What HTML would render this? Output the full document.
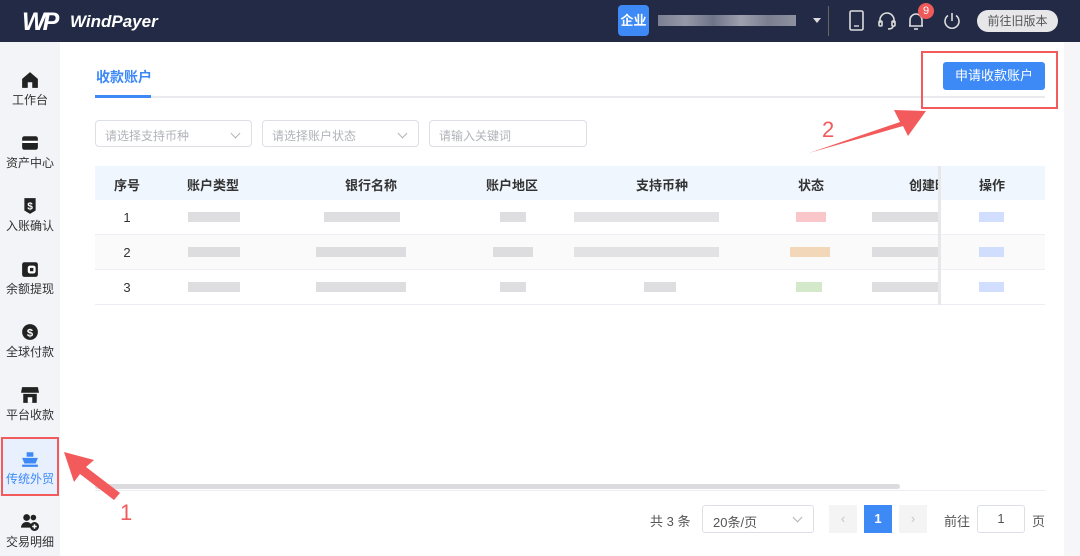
<!DOCTYPE html>
<html><head><meta charset="utf-8"><style>
*{margin:0;padding:0;box-sizing:border-box}
body{width:1080px;height:556px;overflow:hidden;background:#fff;font-family:"Liberation Sans","Noto Sans CJK SC",sans-serif;position:relative;color:#333}
.a{position:absolute}
.hdr{left:0;top:0;width:1080px;height:42px;background:#222a45}
.side{left:0;top:42px;width:60px;height:514px;background:#f3f4f8}
.si{position:absolute;left:0;width:60px;text-align:center;font-size:12px;color:#333}
.si .ic{display:block;margin:0 auto 2px;width:18px;height:18px}
.th{top:166px;height:34px;background:#eff6fd;left:95px;width:950px}
.thc{top:175px;font-size:13px;font-weight:bold;color:#333;transform:translateX(-50%)}
.row{left:95px;width:950px;height:35px;border-bottom:1px solid #ebeef5}
.b{position:absolute;height:10px;background:#d6d6da;opacity:.8}
.sel{border:1px solid #dcdfe6;border-radius:4px;height:27px;top:120px;font-size:12px;color:#b0b3b8;padding:6px 9px}
.chev{position:absolute;right:12px;top:9px;width:7px;height:7px;border-right:1px solid #b0b3b8;border-bottom:1px solid #b0b3b8;transform:rotate(45deg)}
.num{font-size:13px;color:#333;transform:translateX(-50%)}
</style></head><body>
<div class="a hdr"></div>
<div class="a" style="left:22px;top:8px;color:#fff;font-weight:900;font-size:25px;font-style:italic;letter-spacing:-3px">WP</div>
<div class="a" style="left:70px;top:12px;color:#fff;font-weight:bold;font-style:italic;font-size:17px">WindPayer</div>
<div class="a" style="left:618px;top:5px;width:31px;height:31px;background:#3d8af7;border-radius:4px;color:#fff;font-size:13px;font-weight:bold;text-align:center;line-height:31px">企业</div>
<div class="a" style="left:658px;top:15px;width:138px;height:11px;background:linear-gradient(90deg,#8b8fa0,#a8abb8,#7d8194,#b3b5c2,#8a8d9c,#a0a3b0);opacity:.85"></div>
<div class="a" style="left:813px;top:18px;width:0;height:0;border-left:4px solid transparent;border-right:4px solid transparent;border-top:5px solid #ddd"></div>
<div class="a" style="left:828px;top:6px;width:1px;height:30px;background:#666"></div>
<svg class="a" style="left:848px;top:10px" width="18" height="22" viewBox="0 0 18 22"><rect x="2" y="1" width="13" height="19" rx="1.5" fill="none" stroke="#ddd" stroke-width="1.6"/><line x1="6" y1="16" x2="11" y2="16" stroke="#ddd" stroke-width="1.4"/></svg>
<svg class="a" style="left:877px;top:11px" width="20" height="20" viewBox="0 0 20 20" fill="none" stroke="#ddd" stroke-width="1.6"><path d="M3 12V9a7 7 0 0 1 14 0v3"/><rect x="2" y="10" width="3" height="5" rx="1"/><rect x="15" y="10" width="3" height="5" rx="1"/><path d="M16 15c0 2-2 3-5 3"/></svg>
<svg class="a" style="left:906px;top:10px" width="20" height="22" viewBox="0 0 20 22" fill="none" stroke="#ddd" stroke-width="1.6"><path d="M4 16V10a6 6 0 0 1 12 0v6H3h14"/><path d="M8 19h4"/></svg>
<div class="a" style="left:918px;top:3px;width:16px;height:16px;border-radius:50%;background:#f0595a;color:#fff;font-size:11px;text-align:center;line-height:16px">9</div>
<svg class="a" style="left:942px;top:11px" width="20" height="20" viewBox="0 0 20 20" fill="none" stroke="#ddd" stroke-width="1.6"><path d="M10 2v8"/><path d="M6 4.5a7 7 0 1 0 8 0"/></svg>
<div class="a" style="left:977px;top:10px;width:81px;height:22px;border-radius:11px;background:#e7e7ea;color:#555;font-size:12px;text-align:center;line-height:22px">前往旧版本</div>

<div class="a side"></div>
<div class="si" style="top:71px"><svg class="ic" viewBox="0 0 16 16"><path d="M8 1L1 7v8h5v-5h4v5h5V7z" fill="#222"/></svg>工作台</div>
<div class="si" style="top:134px"><svg class="ic" viewBox="0 0 16 16"><rect x="1" y="2" width="14" height="12" rx="2" fill="#222"/><rect x="1" y="6" width="14" height="2" fill="#fff"/></svg>资产中心</div>
<div class="si" style="top:197px"><svg class="ic" viewBox="0 0 16 16"><path d="M3 1h10v11l-5 3-5-3z" fill="#222"/><text x="8" y="11" font-size="9" fill="#fff" text-anchor="middle" font-weight="bold">$</text></svg>入账确认</div>
<div class="si" style="top:260px"><svg class="ic" viewBox="0 0 16 16"><rect x="1" y="2" width="14" height="13" rx="2" fill="#222"/><rect x="6" y="5" width="7" height="7" rx="2" fill="#fff"/><rect x="8" y="7" width="3" height="3" fill="#222"/></svg>余额提现</div>
<div class="si" style="top:323px"><svg class="ic" viewBox="0 0 16 16"><circle cx="8" cy="8" r="7" fill="#222"/><text x="8" y="12" font-size="10" fill="#fff" text-anchor="middle" font-weight="bold">$</text></svg>全球付款</div>
<div class="si" style="top:386px"><svg class="ic" viewBox="0 0 16 16"><path d="M1 1h14l1 5H0z" fill="#222"/><rect x="2" y="7" width="12" height="8" fill="#222"/><rect x="6" y="10" width="4" height="5" fill="#fff"/></svg>平台收款</div>
<div class="a" style="left:1px;top:437px;width:58px;height:59px;background:#e8f0fd;border:2px solid #f25a5c"></div>
<div class="si" style="top:450px;color:#3d8af7"><svg class="ic" viewBox="0 0 16 16"><rect x="5" y="2" width="6" height="4" fill="#3d8af7"/><path d="M1 7h14l-2 5H3z" fill="#3d8af7"/><rect x="1" y="13" width="14" height="2" fill="#3d8af7"/></svg>传统外贸</div>
<div class="si" style="top:513px"><svg class="ic" viewBox="0 0 16 16"><circle cx="5" cy="4" r="3" fill="#222"/><path d="M0 13a5 5 0 0 1 10 0z" fill="#222"/><circle cx="11" cy="4" r="2.5" fill="#222"/><circle cx="12" cy="12" r="4" fill="#222"/><path d="M12 10v4M10 12h4" stroke="#fff" stroke-width="1.3"/></svg>交易明细</div>

<div class="a" style="left:96px;top:67px;font-size:14px;font-weight:bold;color:#3d8af7">收款账户</div>
<div class="a" style="left:95px;top:96px;width:950px;height:2px;background:#e8eaee"></div>
<div class="a" style="left:95px;top:95px;width:56px;height:3px;background:#3d8af7"></div>
<div class="a" style="left:943px;top:62px;width:102px;height:28px;background:#3d8af7;border-radius:3px;color:#fff;font-size:13px;text-align:center;line-height:28px">申请收款账户</div>
<div class="a" style="left:921px;top:51px;width:137px;height:58px;border:2px solid #f25a5c"></div>

<div class="a sel" style="left:95px;width:157px">请选择支持币种<span class="chev"></span></div>
<div class="a sel" style="left:262px;width:157px">请选择账户状态<span class="chev"></span></div>
<div class="a sel" style="left:429px;width:158px">请输入关键词</div>

<div class="a th"></div>
<div class="a thc" style="left:127px">序号</div>
<div class="a thc" style="left:213px">账户类型</div>
<div class="a thc" style="left:371px">银行名称</div>
<div class="a thc" style="left:512px">账户地区</div>
<div class="a thc" style="left:662px">支持币种</div>
<div class="a thc" style="left:811px">状态</div>
<div class="a" style="left:909px;top:175px;font-size:13px;font-weight:bold;width:30px;overflow:hidden;white-space:nowrap">创建时间</div>
<div class="a thc" style="left:992px">操作</div>

<div class="a row" style="top:200px"></div>
<div class="a row" style="top:235px;background:#fafafa"></div>
<div class="a row" style="top:270px"></div>
<div class="a" style="left:938px;top:166px;width:3px;height:139px;background:#e8e8ea"></div>

<div class="a num" style="left:127px;top:210px">1</div>
<div class="a num" style="left:127px;top:245px">2</div>
<div class="a num" style="left:127px;top:280px">3</div>

<div class="b" style="left:188px;top:212px;width:52px"></div>
<div class="b" style="left:188px;top:247px;width:52px"></div>
<div class="b" style="left:188px;top:282px;width:52px"></div>
<div class="b" style="left:324px;top:212px;width:76px"></div>
<div class="b" style="left:316px;top:247px;width:90px"></div>
<div class="b" style="left:316px;top:282px;width:90px"></div>
<div class="b" style="left:500px;top:212px;width:26px"></div>
<div class="b" style="left:493px;top:247px;width:40px"></div>
<div class="b" style="left:500px;top:282px;width:26px"></div>
<div class="b" style="left:574px;top:212px;width:145px;background:#dcdcdf"></div>
<div class="b" style="left:574px;top:247px;width:145px;background:#dcdcdf"></div>
<div class="b" style="left:644px;top:282px;width:32px"></div>
<div class="b" style="left:796px;top:212px;width:30px;background:#f8b8bc"></div>
<div class="b" style="left:790px;top:247px;width:40px;background:#f0cfa8"></div>
<div class="b" style="left:796px;top:282px;width:26px;background:#c8e3bc"></div>
<div class="b" style="left:872px;top:212px;width:66px"></div>
<div class="b" style="left:872px;top:247px;width:66px"></div>
<div class="b" style="left:872px;top:282px;width:66px"></div>
<div class="b" style="left:979px;top:212px;width:25px;background:#c5d6fc"></div>
<div class="b" style="left:979px;top:247px;width:25px;background:#c5d6fc"></div>
<div class="b" style="left:979px;top:282px;width:25px;background:#c5d6fc"></div>

<div class="a" style="left:95px;top:484px;width:805px;height:5px;border-radius:3px;background:#dcdcde"></div>
<div class="a" style="left:95px;top:490px;width:950px;height:1px;background:#ebeef5"></div>
<div class="a" style="left:1064px;top:42px;width:16px;height:514px;background:#f6f6f8"></div>

<div class="a" style="left:650px;top:511px;font-size:13px;color:#555">共 3 条</div>
<div class="a" style="left:702px;top:505px;width:112px;height:28px;border:1px solid #dcdfe6;border-radius:3px;font-size:13px;color:#555;padding:6px 10px">20条/页<span class="chev" style="top:8px"></span></div>
<div class="a" style="left:829px;top:505px;width:28px;height:28px;background:#f4f4f5;color:#c0c4cc;text-align:center;line-height:28px;font-size:13px">‹</div>
<div class="a" style="left:864px;top:505px;width:28px;height:28px;background:#3d8af7;color:#fff;text-align:center;line-height:28px;font-size:13px;font-weight:bold">1</div>
<div class="a" style="left:899px;top:505px;width:28px;height:28px;background:#f4f4f5;color:#c0c4cc;text-align:center;line-height:28px;font-size:13px">›</div>
<div class="a" style="left:944px;top:511px;font-size:13px;color:#555">前往</div>
<div class="a" style="left:977px;top:505px;width:48px;height:28px;border:1px solid #dcdfe6;border-radius:3px;font-size:13px;color:#555;text-align:center;line-height:26px">1</div>
<div class="a" style="left:1032px;top:511px;font-size:13px;color:#555">页</div>

<svg class="a" style="left:0;top:0" width="1080" height="556" viewBox="0 0 1080 556">
<path d="M809 153 L900 122 L894 110 L926 111 L908 136 L903 126 Z" fill="#f25a5c"/>
<path d="M120 493 L86 467 L94 460 L64 452 L74 482 L80 474 L114 500 Z" fill="#f25a5c"/>
<text x="822" y="137" font-size="22" fill="#f25a5c" font-family="Liberation Sans">2</text>
<text x="120" y="520" font-size="22" fill="#f25a5c" font-family="Liberation Sans">1</text>
</svg>
</body></html>
